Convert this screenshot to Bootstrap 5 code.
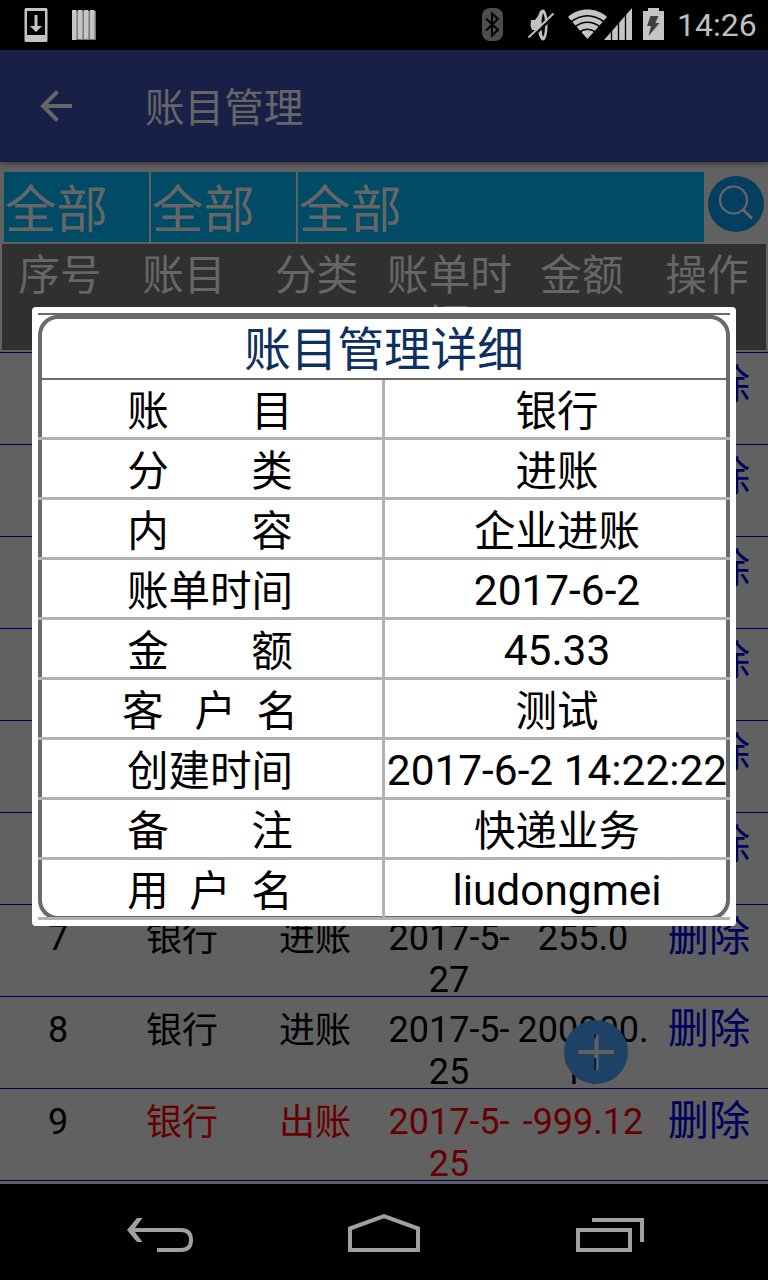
<!DOCTYPE html>
<html lang="zh-CN">
<head>
<meta charset="utf-8">
<meta name="viewport" content="width=device-width, initial-scale=1">
<title>账目管理</title>
<link rel="stylesheet" href="https://cdn.jsdelivr.net/npm/bootstrap@5.3.0/dist/css/bootstrap.min.css">
<style>
  body { font-family: Roboto, "Noto Sans CJK SC", sans-serif; width: 768px; height: 1280px; background: #616161; color: #000; }
  svg { display: block; flex: none; }
  .statusbar { height: 50px; background: #000; color: #bebebe; }
  .clock { font-size: 32px; line-height: 52px; width: 98px; padding-left: 7px; }
  .appbar { height: 112px; background: #192048; color: #666; box-shadow: 0 1px 6px rgba(0,0,0,.55); z-index: 1; }
  .appbar h1 { font-size: 39.6px; line-height: 48px; margin-left: 71px; padding-top: 5px; }
  .filters { height: 82px; padding: 10px 4px 2px; gap: 2px; }
  .filter { height: 70px; background: #004c66; color: #666; font-size: 51.5px; line-height: 78px; padding-left: 1px; }
  .pick { width: 145px; }
  .ledger { display: grid; grid-template-columns: 116px 132px 134px 134px 134px 118px; text-align: center; }
  .ledger-head { margin: 0 2px 2px; height: 106px; grid-template-columns: 116px 132px 133px 133px 132px 118px; background: #303030; color: #666; font-size: 41.7px; line-height: 49px; padding-top: 7px; }
  .ledger-row { height: 92px; border-top: 1px solid #00006a; font-size: 36px; line-height: 42px; padding-top: 12px; overflow: hidden; }
  .ledger-row > .han { line-height: 45px; }
  .ledger-row .del { font-size: 41.2px; line-height: 48px; color: #00005c; margin-top: -4px; white-space: nowrap; }
  .out { color: #660000; }
  .navbar-keys { height: 96px; background: #000; }
  .fab { left: 564px; top: 1020px; }
  .dialog-box { left: 32px; top: 307px; width: 704px; height: 619px; background: #fff; border-radius: 4px; padding: 6px; }
  .sheet { border: 4px solid #6a6a6a; border-radius: 20px; height: 605px; }
  .topline { height: 4px; margin-bottom: -2px; background: #6a6a6a; clip-path: polygon(0 0, 100% 0, 100% 50%, 97.5% 50%, 97.5% 100%, 2.5% 100%, 2.5% 50%, 0 50%); }
  .sheet-title { height: 61px; border-bottom: 2px solid #6a6a6a; color: #0d2f62; font-size: 46.6px; line-height: 63px; }
  .detail { height: 60px; margin: 0 -4px; border-bottom: 3px solid #b2b2b2; font-size: 41.5px; line-height: 63px; white-space: pre; text-align: center; }
  .detail dt { width: 347px; border-right: 3px solid #b2b2b2; font-weight: 400; height: 57px; }
  .detail dd { width: 345px; height: 57px; margin: 0; padding-right: 1px; }
  .detail .latin { font-size: 42.4px; line-height: 61px; }
</style>
</head>
<body class="m-0 overflow-hidden position-relative d-flex flex-column">
  <header class="statusbar d-flex align-items-center flex-shrink-0">
    <svg width="110" height="50" viewBox="0 0 110 50">
      <path fill="#c4c4c4" fill-rule="evenodd" d="M26 8H46q1.500 0 1.500 1.500V40.500q0 1.500-1.500 1.500H26q-1.500 0-1.500-1.500V9.500Q24.500 8 26 8ZM27 11V35H45V11Z"/>
      <path fill="#c4c4c4" d="M34.500 15h3V26H42L36 32 30 26h4.500Z"/>
      <path fill="#777" d="M73 11h5v29h-5zM79 11h5v29h-5zM85 11h5v29h-5zM91 11h5v29h-5z"/>
      <path fill="#c4c4c4" d="M72 10h4.500v28.500l-1 1.500H72zM78 10h4.500v28.500l-4.500 1zM84 10h4.500v28.500l-4.500 1zM90 10h4.500v28.500l-4.500 1z"/>
    </svg>
    <svg class="ms-auto" width="200" height="50" viewBox="470 0 200 50">
      <rect x="482" y="8" width="21" height="33" rx="8" fill="#4d4d4d"/>
      <path d="M486 18.500 498 30 492 35.500V13.500L498 19 486 30.500" fill="none" stroke="#000" stroke-width="2"/>
      <path fill="#c0c0c0" d="M531 20h4l3-4 2-5q1.500-1.500 3-1.500c3 0 4.500 7 4.500 15.500s-1.500 15.500-4.500 15.500q-2 0-3.500-4l-2-5.500-1.500-1h-4l-1.500-4Z"/>
      <path fill="#000" d="M543 13q2 3 2 12t-2 12q-1.500-4-1.500-12t1.500-12Z"/>
      <path d="M530 39.200 555 15.200" stroke="#000" stroke-width="2.500"/><path d="M528.500 37.500 553.500 13.500" stroke="#c0c0c0" stroke-width="2"/>
      <path fill="#c4c4c4" d="M568 17C578 7 597 7 607 17L587.500 39Z"/>
      <g fill="none" stroke="#000" stroke-width="1.600"><path d="M570 22.500Q587.500 9 605 22.500M574 27.500Q587.500 17 601 27.500M579 32.500Q587.500 26 596 32.500"/></g>
      <path fill="#c4c4c4" d="M604 40 632 8V40Z"/>
      <path stroke="#000" stroke-width="1.300" d="M611.500 8V40M618.500 8V40M625.500 8V40"/>
      <path fill="#c4c4c4" d="M648 8h11v3h5v29h-21V11h5z"/>
      <path fill="#404040" d="M650.500 16h8l-3 7h4L648.500 36l2.500-10H647Z"/>
    </svg>
    <span class="clock">14:26</span>
  </header>

  <nav class="appbar d-flex align-items-center flex-shrink-0 position-relative">
    <svg class="ms-4" width="50" height="50" viewBox="24 81 50 50"><path d="M72 106H43M57.500 91.500 43 106l14.500 14.500" fill="none" stroke="#666" stroke-width="4"/></svg>
    <h1 class="mb-0 fw-normal">账目管理</h1>
  </nav>

  <main class="flex-grow-1 overflow-hidden">
    <div class="filters d-flex">
      <div class="filter pick">全部</div>
      <div class="filter pick">全部</div>
      <div class="filter flex-grow-1">全部</div>
      <svg width="58" height="70" viewBox="706 172 58 70">
        <circle cx="736" cy="204" r="28" fill="#053f60"/>
        <circle cx="733.500" cy="200" r="13.500" fill="none" stroke="#666" stroke-width="2.200"/>
        <path d="M743.500 210 752 218.500" stroke="#666" stroke-width="3"/>
      </svg>
    </div>
    <div class="ledger ledger-head overflow-hidden">
      <span>序号</span><span>账目</span><span>分类</span><span>账单时间</span><span>金额</span><span>操作</span>
    </div>
    <div>
      <div class="ledger ledger-row"><span></span><span></span><span></span><span></span><span></span><span class="del">删除</span></div>
      <div class="ledger ledger-row"><span></span><span></span><span></span><span></span><span></span><span class="del">删除</span></div>
      <div class="ledger ledger-row"><span></span><span></span><span></span><span></span><span></span><span class="del">删除</span></div>
      <div class="ledger ledger-row"><span></span><span></span><span></span><span></span><span></span><span class="del">删除</span></div>
      <div class="ledger ledger-row"><span></span><span></span><span></span><span></span><span></span><span class="del">删除</span></div>
      <div class="ledger ledger-row"><span></span><span></span><span></span><span></span><span></span><span class="del">删除</span></div>
      <div class="ledger ledger-row"><span>7</span><span class="han">银行</span><span class="han">进账</span><span>2017-5-<br>27</span><span>255.0</span><span class="del">删除</span></div>
      <div class="ledger ledger-row"><span>8</span><span class="han">银行</span><span class="han">进账</span><span>2017-5-<br>25</span><span>200000.<br>11</span><span class="del">删除</span></div>
      <div class="ledger ledger-row"><span>9</span><span class="han out">银行</span><span class="han out">出账</span><span class="out">2017-5-<br>25</span><span class="out">-999.12</span><span class="del">删除</span></div>
      <div class="ledger ledger-row"></div>
    </div>
  </main>

  <svg class="fab position-absolute" width="64" height="64" viewBox="0 0 64 64">
    <path fill="#1e4266" fill-rule="evenodd" d="M32 0a32 32 0 1 0 0 64 32 32 0 1 0 0-64ZM30.500 14.500h4v15.500H50v4H34.500V50h-4V34H14.500v-4h16Z"/>
  </svg>

  <section class="dialog-box position-absolute" role="dialog">
    <div class="topline"></div>
    <div class="sheet">
      <div class="sheet-title text-center">账目管理详细</div>
      <dl class="mb-0">
        <div class="detail d-flex"><dt>账        目</dt><dd>银行</dd></div>
        <div class="detail d-flex"><dt>分        类</dt><dd>进账</dd></div>
        <div class="detail d-flex"><dt>内        容</dt><dd>企业进账</dd></div>
        <div class="detail d-flex"><dt>账单时间</dt><dd class="latin">2017-6-2</dd></div>
        <div class="detail d-flex"><dt>金        额</dt><dd class="latin">45.33</dd></div>
        <div class="detail d-flex"><dt>客   户  名</dt><dd>测试</dd></div>
        <div class="detail d-flex"><dt>创建时间</dt><dd class="latin">2017-6-2 14:22:22</dd></div>
        <div class="detail d-flex"><dt>备        注</dt><dd>快递业务</dd></div>
        <div class="detail d-flex"><dt>用  户  名</dt><dd class="latin">liudongmei</dd></div>
      </dl>
    </div>
  </section>

  <footer class="navbar-keys flex-shrink-0">
    <svg width="768" height="96" viewBox="0 1184 768 96" fill="none" stroke="#a0a0a0" stroke-width="4">
      <path d="M130 1230H181Q191 1230 191 1240T181 1250H157"/>
      <path fill="#a0a0a0" stroke="none" d="M127 1230 137 1218H142.500L133.500 1230 142.500 1242H137Z"/>
      <path d="M350 1228.500 384 1216.200 418 1228.500V1250H350Z"/>
      <path d="M578 1230H630V1250H578ZM592 1220H642V1242"/>
    </svg>
  </footer>
<script src="https://cdn.jsdelivr.net/npm/bootstrap@5.3.0/dist/js/bootstrap.bundle.min.js"></script>
</body>
</html>
